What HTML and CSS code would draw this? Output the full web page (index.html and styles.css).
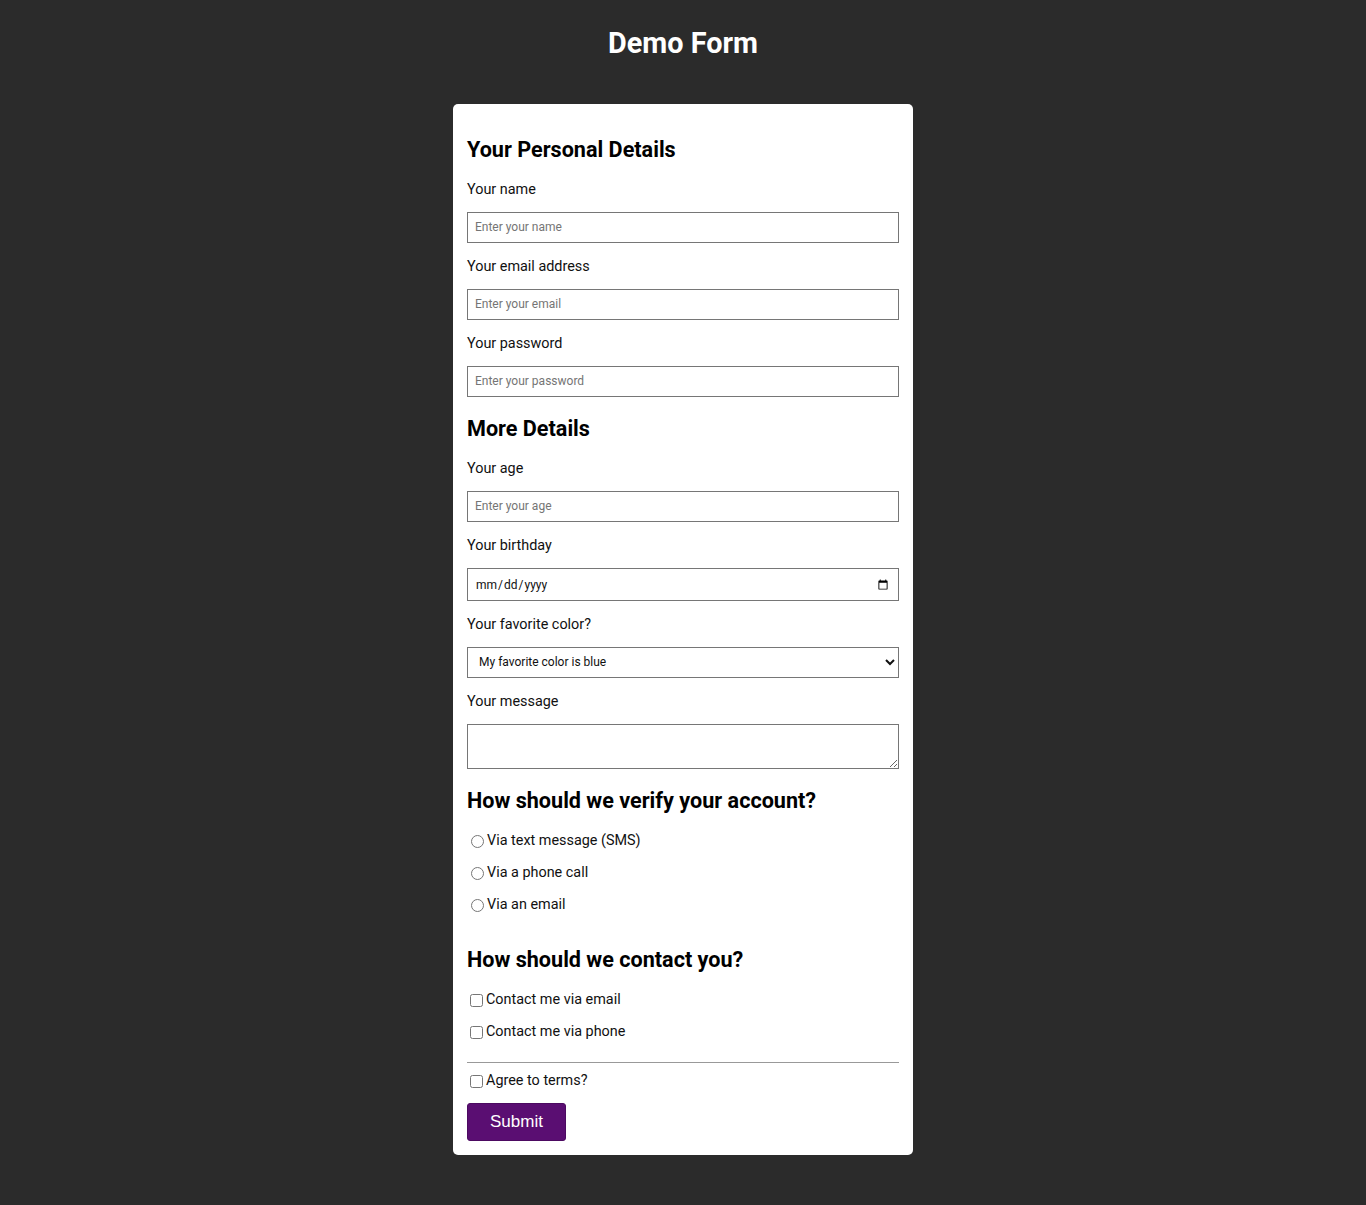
FILE: index.html
```html
<!DOCTYPE html>
<html lang="en">
<head>
<meta charset="utf-8">
<title>Demo Form</title>
<link rel="stylesheet" href="styles.css">
</head>
<body>
<header class="page-header">
  <h1 class="page-title">Demo Form</h1>
</header>
<main class="card">
  <form class="form">
    <h2 class="section-title">Your Personal Details</h2>
    <label class="field-label" for="name">Your name</label>
    <input class="field" id="name" type="text" placeholder="Enter your name">
    <label class="field-label" for="email">Your email address</label>
    <input class="field" id="email" type="email" placeholder="Enter your email">
    <label class="field-label" for="password">Your password</label>
    <input class="field" id="password" type="password" placeholder="Enter your password">

    <h2 class="section-title">More Details</h2>
    <label class="field-label" for="age">Your age</label>
    <input class="field" id="age" type="number" placeholder="Enter your age">
    <label class="field-label" for="birthday">Your birthday</label>
    <input class="field field-date" id="birthday" type="date">
    <label class="field-label" for="color">Your favorite color?</label>
    <select class="field field-select" id="color">
      <option>My favorite color is blue</option>
      <option>My favorite color is red</option>
      <option>My favorite color is green</option>
    </select>
    <label class="field-label" for="message">Your message</label>
    <textarea class="field field-textarea" id="message"></textarea>

    <h2 class="section-title">How should we verify your account?</h2>
    <div class="options">
      <label class="option"><input class="radio" type="radio" name="verify">Via text message (SMS)</label>
      <label class="option"><input class="radio" type="radio" name="verify">Via a phone call</label>
      <label class="option"><input class="radio" type="radio" name="verify">Via an email</label>
    </div>

    <h2 class="section-title">How should we contact you?</h2>
    <div class="options">
      <label class="option"><input class="check" type="checkbox">Contact me via email</label>
      <label class="option"><input class="check" type="checkbox">Contact me via phone</label>
    </div>
    <hr class="divider">
    <label class="option option-terms"><input class="check" type="checkbox">Agree to terms?</label>
    <button class="submit" type="submit">Submit</button>
  </form>
</main>
</body>
</html>
```

FILE: styles.css
```css
html, body {
  margin: 0;
  padding: 0;
}
body {
  background: #2b2b2b;
  font-family: Roboto, "Liberation Sans", Arial, sans-serif;
  color: #111;
  min-height: 1205px;
}
.page-header {
  padding: 26px 0 0;
  height: 78px;
  box-sizing: border-box;
}
.page-title {
  margin: 0;
  text-align: center;
  color: #fff;
  font-size: 28.8px;
  line-height: 34px;
  font-weight: 700;
}
.card {
  width: 460px;
  box-sizing: border-box;
  margin: 26px auto 0;
  background: #fff;
  border-radius: 5px;
  padding: 14px;
}
.form {
  display: flow-root;
}
.section-title {
  font-size: 21.6px;
  line-height: 26px;
  font-weight: 700;
  margin: 19px 0 18px;
  color: #000;
}
.field-label {
  display: block;
  font-size: 14.4px;
  line-height: 16px;
  padding-top: 1px;
  margin: 15px 0 14px;
  color: #111;
}
.section-title + .field-label {
  margin-top: 0;
}
.field {
  display: block;
  width: 100%;
  box-sizing: border-box;
  height: 31px;
  margin: 0 0 15px;
  border: 1px solid #767676;
  border-radius: 0;
  padding: 0 7px 2px;
  font-family: Roboto, "Liberation Sans", Arial, sans-serif;
  font-size: 12px;
  color: #111;
  background: #fff;
}
.field::placeholder {
  color: #757575;
}
.field-date {
  height: 33px;
  padding: 0 7px;
}
.field-select {
  padding: 0 6px 2px 7px;
}
.field-textarea {
  height: 45px;
  resize: vertical;
  padding: 6px 7px;
}
.options {
  display: flow-root;
}
.option {
  display: flex;
  align-items: center;
  font-size: 14.4px;
  line-height: 16px;
  padding-top: 1px;
  margin: 0 0 15px;
  color: #111;
}
.radio {
  margin: 0 3px 0 4px;
  width: 13px;
  height: 13px;
}
.check {
  margin: 0 3px 0 3px;
  width: 13px;
  height: 13px;
}
.divider {
  border: 0;
  border-top: 1px solid #999;
  margin: 7px 0 9px;
  height: 0;
}
.option-terms {
  margin-bottom: 14px;
}
.submit {
  display: block;
  width: 99px;
  height: 38px;
  background: #5a0e72;
  color: #fff;
  border: 1px solid #4c0a61;
  border-radius: 3px;
  font-family: "Liberation Sans", Arial, sans-serif;
  font-size: 17px;
  padding: 0;
  cursor: pointer;
}
```
